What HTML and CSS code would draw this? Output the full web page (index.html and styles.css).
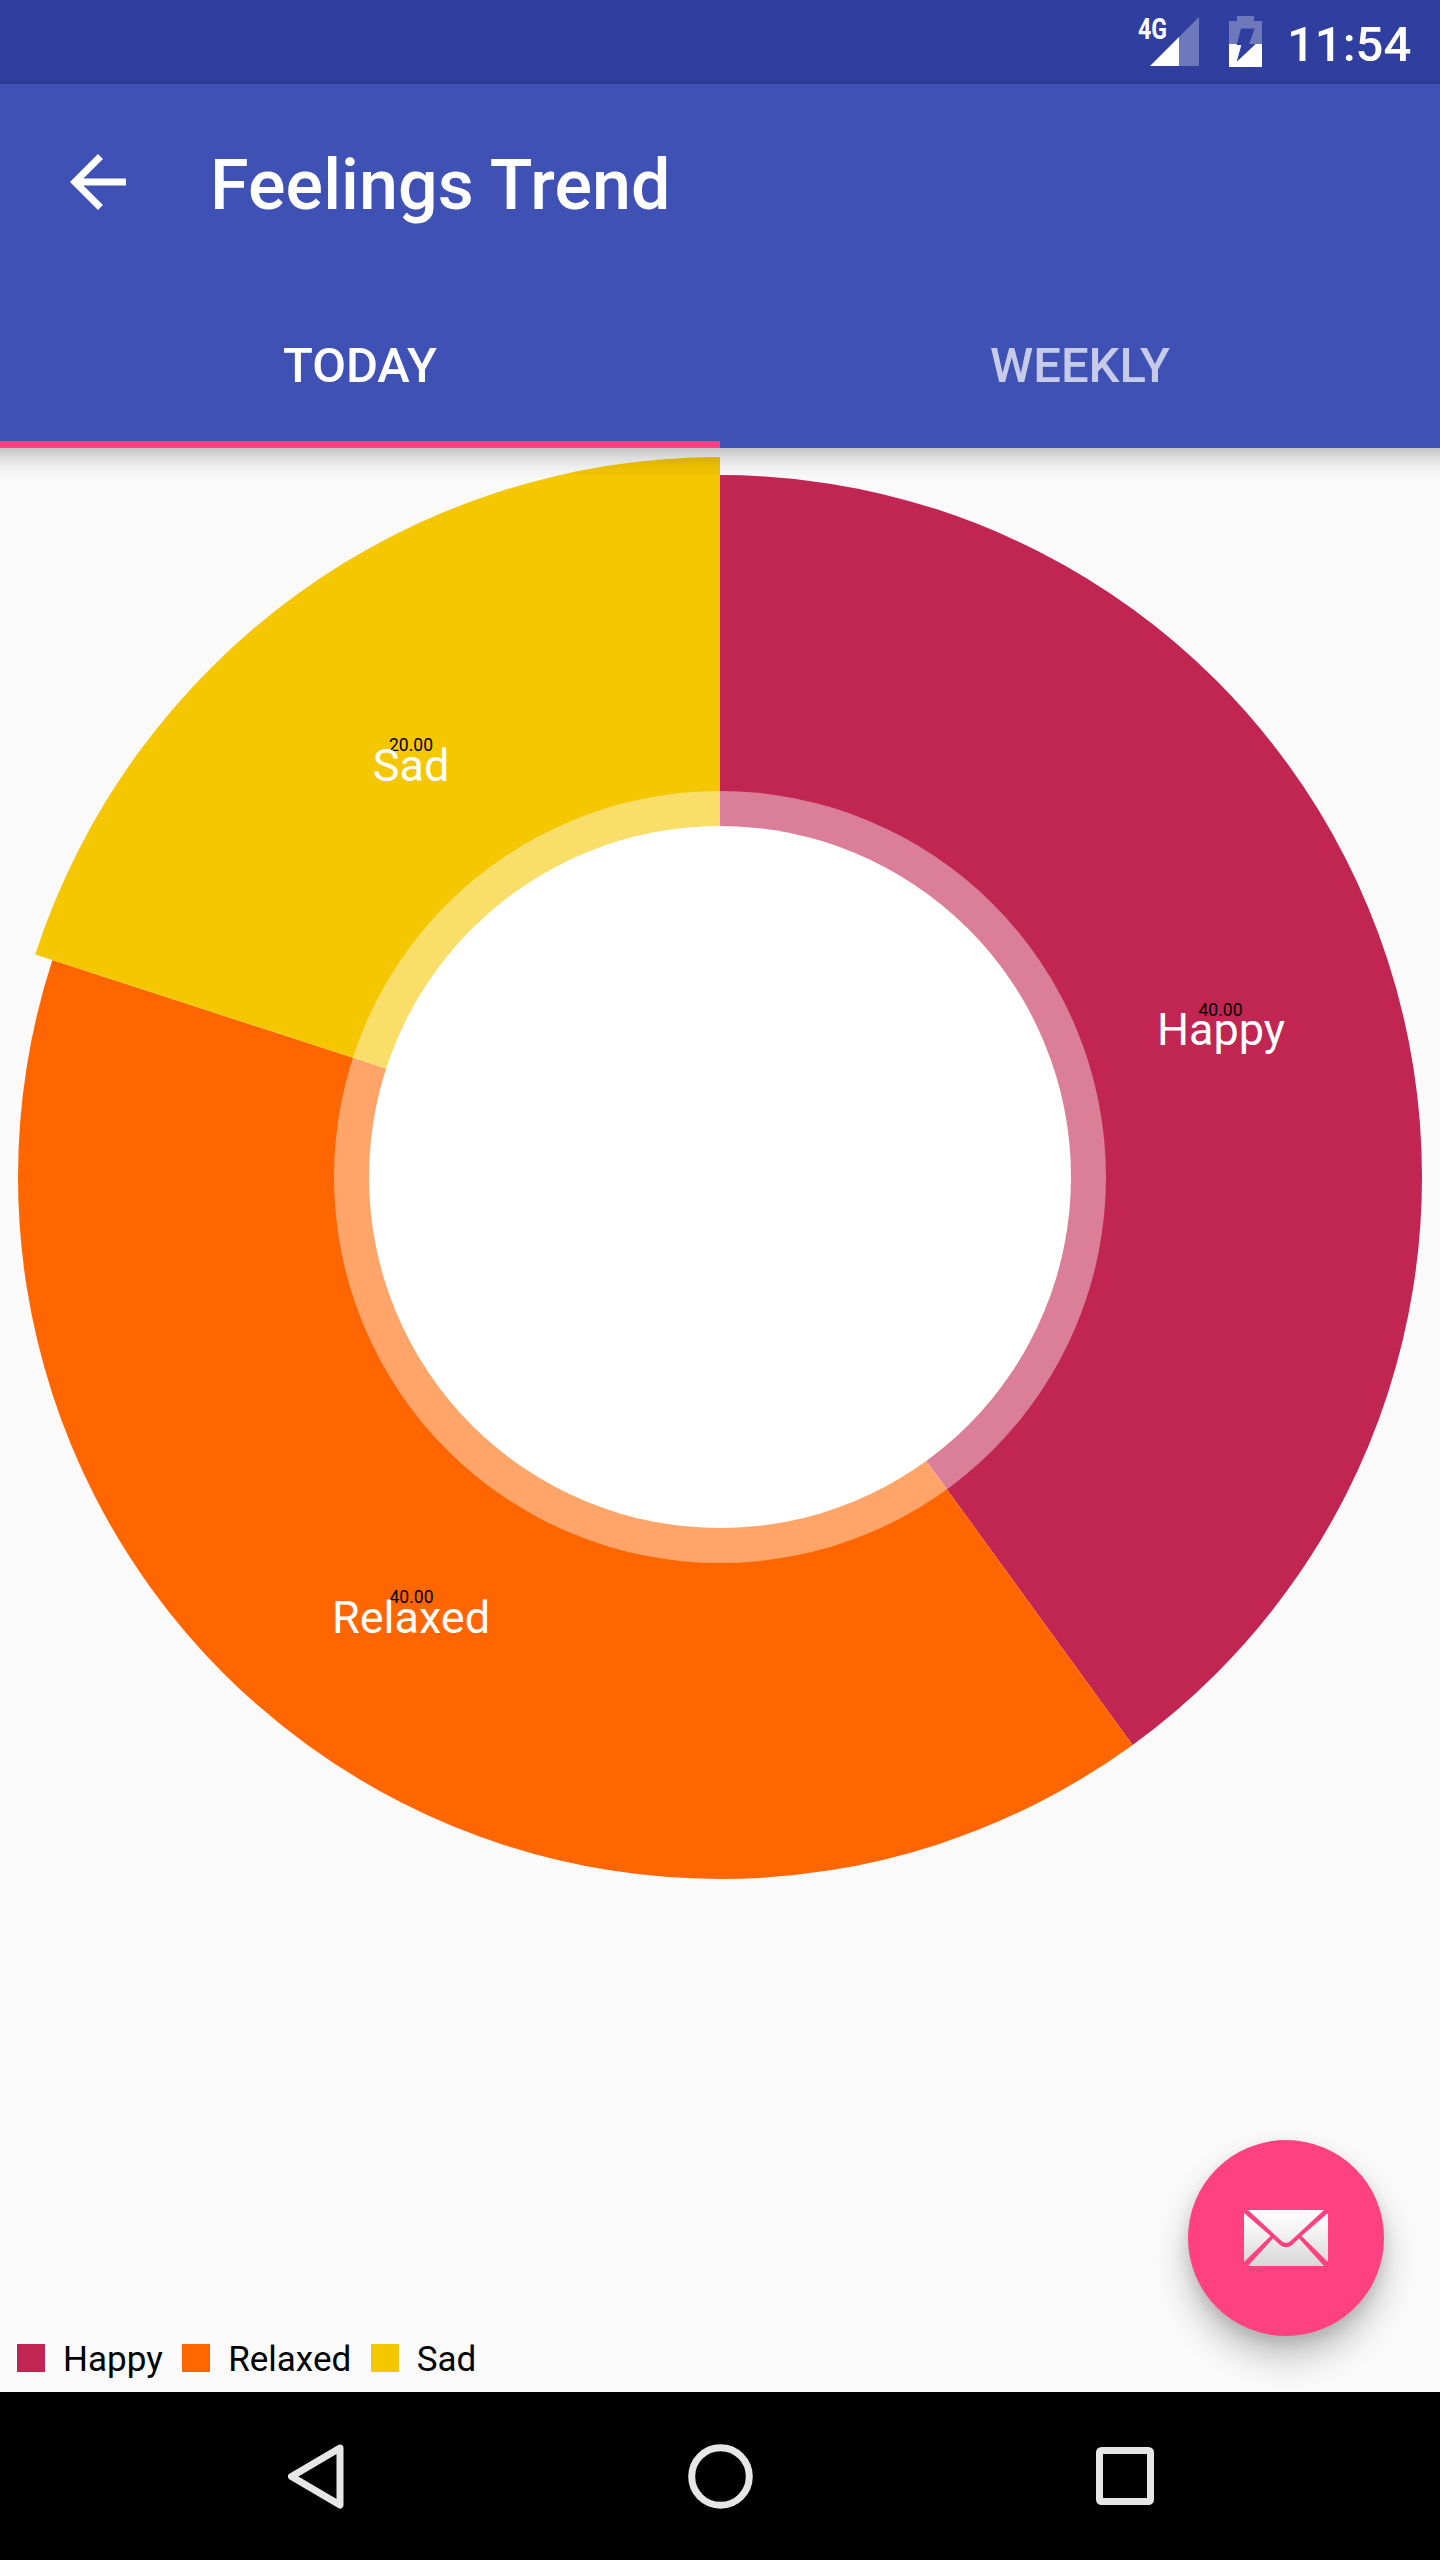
FILE: index.html
```html
<!DOCTYPE html>
<html lang="en">
<head>
<meta charset="utf-8">
<title>Feelings Trend</title>
<link rel="stylesheet" href="styles.css">
</head>
<body>
<div class="screen">
  <div class="status-bar">
    <svg class="status-net" width="62" height="52" viewBox="1138 16 62 52">
      <text class="net-label" x="1138" y="39" textLength="29" lengthAdjust="spacingAndGlyphs">4G</text>
      <path class="dim" d="M1179 37L1199 17V66H1179Z"/>
      <path class="solid" d="M1150 66L1179 37V66Z"/>
    </svg>
    <svg class="status-battery" width="33" height="52" viewBox="1229 16 33 52">
      <path class="dim" d="M1237 16H1254V21H1262V44H1229V21H1237Z"/>
      <path class="solid" d="M1229 44H1262V67H1229Z"/>
      <path class="bolt" d="M1241 28.5H1254.7L1249 44H1255.7L1236.7 61.7L1241.3 45H1236.7Z"/>
    </svg>
    <span class="clock">11:54</span>
  </div>

  <header class="app-bar">
    <div class="toolbar">
      <svg class="back-arrow" width="84" height="84" viewBox="0 0 24 24"><path d="M20 11H7.83l5.59-5.59L12 4l-8 8 8 8 1.41-1.41L7.83 13H20v-2z"/></svg>
      <h1 class="title">Feelings Trend</h1>
    </div>
    <nav class="tabs">
      <div class="tab tab-active">TODAY</div>
      <div class="tab">WEEKLY</div>
    </nav>
  </header>

  <main class="content">
    <svg class="chart" width="1440" height="1440" viewBox="0 448 1440 1440">
      <path class="slice-happy" d="M720 1177V475A702 702 0 0 1 1132.63 1744.93Z"/>
      <path class="slice-relaxed" d="M720 1177L1132.63 1744.93A702 702 0 0 1 52.36 960.07Z"/>
      <path class="slice-sad" d="M720 1177L35.24 954.51A720 720 0 0 1 720 457Z"/>
      <circle class="ring" cx="720" cy="1177" r="386"/>
      <circle class="hole" cx="720" cy="1177" r="351"/>
      <text class="value" x="1220.5" y="1016">40.00</text>
      <text class="value" x="411.5" y="1603">40.00</text>
      <text class="value" x="411" y="751">20.00</text>
      <text class="entry" x="1221" y="1045">Happy</text>
      <text class="entry" x="411" y="1633">Relaxed</text>
      <text class="entry" x="411" y="781">Sad</text>
    </svg>

    <div class="legend">
      <div class="legend-item"><span class="swatch swatch-happy"></span><span>Happy</span></div>
      <div class="legend-item"><span class="swatch swatch-relaxed"></span><span>Relaxed</span></div>
      <div class="legend-item"><span class="swatch swatch-sad"></span><span>Sad</span></div>
    </div>

    <div class="shadow"></div>

    <button class="fab" aria-label="Send">
      <svg class="mail" width="84" height="58" viewBox="0 0 84 58">
        <defs>
          <linearGradient id="mail" gradientUnits="userSpaceOnUse" x1="0" y1="0" x2="0" y2="58">
            <stop offset="0" stop-color="#ffffff"/>
            <stop offset="0.4" stop-color="#f3f3f3"/>
            <stop offset="1" stop-color="#d6d6d6"/>
          </linearGradient>
        </defs>
        <g class="mail-parts">
          <path d="M4 1H80L46.5 32Q42 36 37.5 32Z"/>
          <path d="M0 4L26.5 27L0 53Z"/>
          <path d="M84 4L57.5 27L84 53Z"/>
          <path d="M4 57L29 29.5L36 36Q42 40.5 48 36L55 29.5L80 57Z"/>
        </g>
      </svg>
    </button>
  </main>

  <footer class="nav-bar">
    <svg class="nav-icon" width="56" height="65" viewBox="288 2444 56 65"><path d="M340 2448L291.5 2476.5L340 2505Z"/></svg>
    <svg class="nav-icon" width="65" height="65" viewBox="688 2444 65 65"><circle cx="720.5" cy="2476.5" r="28.8"/></svg>
    <svg class="nav-icon" width="58" height="58" viewBox="1096 2447 58 58"><rect x="1099.5" y="2450.5" width="51" height="51" rx="2"/></svg>
  </footer>
</div>
</body>
</html>
```

FILE: styles.css
```css
* { box-sizing: border-box; }

html, body {
  margin: 0;
  padding: 0;
}

body {
  font-family: Roboto, "Noto Sans", sans-serif;
  background: #fafafa;
}

.screen {
  width: 1440px;
  height: 2560px;
  display: flex;
  flex-direction: column;
  overflow: hidden;
}

/* Status bar */
.status-bar {
  height: 84px;
  flex: none;
  display: flex;
  align-items: flex-start;
  background: linear-gradient(#303f9f 0, #303f9f 79px, #2b3a8e 84px);
  color: #fff;
  padding-left: 1138px;
}

.status-net { margin-top: 16px; overflow: visible; }
.status-battery { margin: 16px 0 0 29px; }

.net-label {
  font-family: Roboto, sans-serif;
  font-weight: 700;
  font-size: 29px;
  fill: #fff;
}

.dim { fill: #fff; fill-opacity: 0.3; }
.solid { fill: #fff; }
.bolt { fill: #303f9f; }

.clock {
  margin-left: 25px;
  font-size: 49px;
  font-weight: 500;
  line-height: 90px;
}

/* App bar */
.app-bar {
  flex: none;
  height: 364px;
  background: #3f51b5;
  color: #fff;
}

.toolbar {
  height: 196px;
  display: flex;
  align-items: center;
  padding-left: 56px;
}

.back-arrow { fill: #fff; flex: none; }

.title {
  margin: 6px 0 0 70px;
  font-size: 70px;
  font-weight: 500;
  line-height: 1;
  letter-spacing: 0.1px;
}

.tabs {
  height: 168px;
  display: flex;
}

.tab {
  flex: 1;
  display: flex;
  align-items: center;
  justify-content: center;
  padding-top: 10px;
  border-bottom: 7px solid transparent;
  font-size: 49px;
  font-weight: 500;
  color: rgba(255, 255, 255, 0.7);
}

.tab-active {
  color: #fff;
  border-bottom-color: #ff4081;
}

/* Content */
.content {
  position: relative;
  flex: 1;
  display: flex;
  flex-direction: column;
  background: #fafafa;
}

.shadow {
  position: absolute;
  top: 0;
  left: 0;
  right: 0;
  height: 30px;
  background: linear-gradient(rgba(0, 0, 0, 0.21), rgba(0, 0, 0, 0.12) 30%, rgba(0, 0, 0, 0.05) 62%, rgba(0, 0, 0, 0));
}

.chart {
  display: block;
  flex: none;
}

.slice-happy { fill: #c12552; }
.slice-relaxed { fill: #ff6600; }
.slice-sad { fill: #f5c700; }
.ring { fill: #fff; fill-opacity: 0.41; }
.hole { fill: #fff; }

.value {
  font-size: 17.5px;
  fill: #000;
  text-anchor: middle;
}

.entry {
  font-size: 45px;
  fill: #fff;
  text-anchor: middle;
}

/* Legend */
.legend {
  margin-top: auto;
  padding: 0 0 16px 17px;
  display: flex;
  gap: 19.5px;
  font-size: 35px;
  line-height: 32px;
  color: #000;
}

.legend-item {
  display: flex;
  align-items: flex-start;
  gap: 18px;
}

.swatch {
  width: 28px;
  height: 28px;
  flex: none;
}

.swatch-happy { background: #c12552; }
.swatch-relaxed { background: #ff6600; }
.swatch-sad { background: #f5c700; }

/* Floating action button */
.fab {
  position: absolute;
  right: 56px;
  bottom: 56px;
  width: 196px;
  height: 196px;
  padding: 0;
  border: 0;
  border-radius: 50%;
  background: #ff4081;
  box-shadow: 0 21px 35px rgba(0, 0, 0, 0.24), 0 7px 14px rgba(0, 0, 0, 0.1);
  display: flex;
  align-items: center;
  justify-content: center;
}

.mail { filter: blur(0.5px); }
.mail-parts { fill: url(#mail); }

/* Navigation bar */
.nav-bar {
  flex: none;
  height: 168px;
  background: #000;
  display: flex;
  align-items: center;
  justify-content: space-between;
  padding: 0 286px 0 288px;
}

.nav-icon {
  fill: none;
  stroke: #e6e6e6;
  stroke-width: 7px;
  stroke-linejoin: round;
}
```
